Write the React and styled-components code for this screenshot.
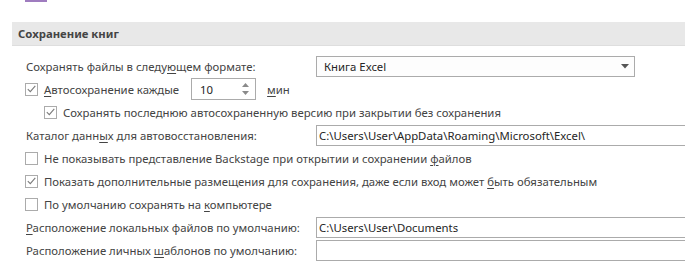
import styled, { createGlobalStyle } from "styled-components";

const Global = createGlobalStyle`
  html, body {
    margin: 0;
    padding: 0;
    background: #fff;
    overflow: hidden;
  }
  body {
    font-family: "Segoe UI", "Noto Sans", sans-serif;
    font-size: 11.35px;
    color: #444;
  }
`;

const Page = styled.div`
  width: 685px;
  height: 277px;
  overflow: hidden;
`;

const TopTab = styled.div`
  margin-left: 25px;
  width: 22px;
  height: 2px;
  background: #9f7cbf;
`;

const SectionHead = styled.div`
  margin: 20px 0 0 12px;
  height: 23px;
  background: #e8e8e8;
  border-bottom: 1px solid #dedede;
  display: flex;
  align-items: center;
  padding-left: 6px;
  font-weight: bold;
  color: #444;
`;

const Rows = styled.div`
  display: flex;
  flex-direction: column;
  gap: 1px;
  padding-top: 9px;
`;

const Row = styled.div`
  height: 22px;
  display: flex;
  align-items: center;
  padding-left: ${(p) => p.$indent || 0}px;
  white-space: nowrap;
`;

const Label = styled.span`
  width: ${(p) => (p.$w ? p.$w + "px" : "auto")};
  flex-shrink: 0;
`;

const Box = styled.span`
  width: 13px;
  height: 13px;
  box-sizing: border-box;
  border: 1px solid #ababab;
  background: #fff;
  display: inline-flex;
  align-items: center;
  justify-content: center;
  margin-right: 6px;
  flex-shrink: 0;
`;

const Field = styled.div`
  box-sizing: border-box;
  height: 21px;
  width: ${(p) => p.$w}px;
  border: 1px solid #ababab;
  background: #fff;
  display: flex;
  align-items: center;
  padding-left: ${(p) => p.$pad || 2}px;
  color: #262626;
  flex-shrink: 0;
`;

const Select = styled(Field)`
  justify-content: space-between;
  padding-right: 5px;
  background: #fdfdfd;
`;

const Spin = styled(Field)`
  height: 22px;
  justify-content: space-between;
  padding-right: 6px;
  margin-left: 12px;
  margin-right: 11px;
`;

const SpinArrows = styled.div`
  display: flex;
  flex-direction: column;
  gap: 4px;
`;

const U = styled.u`
  text-underline-offset: 2px;
`;

function Check({ on }) {
  return (
    <Box>
      {on && (
        <svg width="9" height="8" viewBox="0 0 9 8">
          <path d="M0.8 4.2 L3.3 6.6 L8.3 0.9" fill="none" stroke="#7a7a7a" strokeWidth="1.1" />
        </svg>
      )}
    </Box>
  );
}

export default function App() {
  return (
    <Page>
      <Global />
      <TopTab />
      <SectionHead>Сохранение книг</SectionHead>
      <Rows>
        <Row $indent={26}>
          <Label $w={290}>
            Сохранять файлы в следу<U>ю</U>щем формате:
          </Label>
          <Select $w={319} $pad={7}>
            <span>Книга Excel</span>
            <svg width="8" height="5" viewBox="0 0 8 5">
              <path d="M0 0 H8 L4 4.5 Z" fill="#555" />
            </svg>
          </Select>
        </Row>
        <Row $indent={25}>
          <Check on />
          <Label>
            <U>А</U>втосохранение каждые
          </Label>
          <Spin $w={65} $pad={8}>
            <span>10</span>
            <SpinArrows>
              <svg width="7" height="4" viewBox="0 0 7 4">
                <path d="M0 4 H7 L3.5 0 Z" fill="#8a8a8a" />
              </svg>
              <svg width="7" height="4" viewBox="0 0 7 4">
                <path d="M0 0 H7 L3.5 4 Z" fill="#8a8a8a" />
              </svg>
            </SpinArrows>
          </Spin>
          <Label>
            <U>м</U>ин
          </Label>
        </Row>
        <Row $indent={44}>
          <Check on />
          <Label>Сохранять последнюю автосохраненную версию при закрытии без сохранения</Label>
        </Row>
        <Row $indent={26}>
          <Label $w={290}>
            Каталог данн<U>ы</U>х для автовосстановления:
          </Label>
          <Field $w={380}>C:\Users\User\AppData\Roaming\Microsoft\Excel\</Field>
        </Row>
        <Row $indent={25}>
          <Check />
          <Label>
            Не показывать представление Backstage при открытии и сохранении <U>ф</U>айлов
          </Label>
        </Row>
        <Row $indent={25}>
          <Check on />
          <Label>
            Показать дополнительные размещения для сохранения, даже если вход может <U>б</U>ыть обязательным
          </Label>
        </Row>
        <Row $indent={25}>
          <Check />
          <Label>
            По умолчанию сохранять на <U>к</U>омпьютере
          </Label>
        </Row>
        <Row $indent={26}>
          <Label $w={290}>
            <U>Р</U>асположение локальных файлов по умолчанию:
          </Label>
          <Field $w={380}>C:\Users\User\Documents</Field>
        </Row>
        <Row $indent={26}>
          <Label $w={290}>
            Расположение личных <U>ш</U>аблонов по умолчанию:
          </Label>
          <Field $w={380} />
        </Row>
      </Rows>
    </Page>
  );
}
